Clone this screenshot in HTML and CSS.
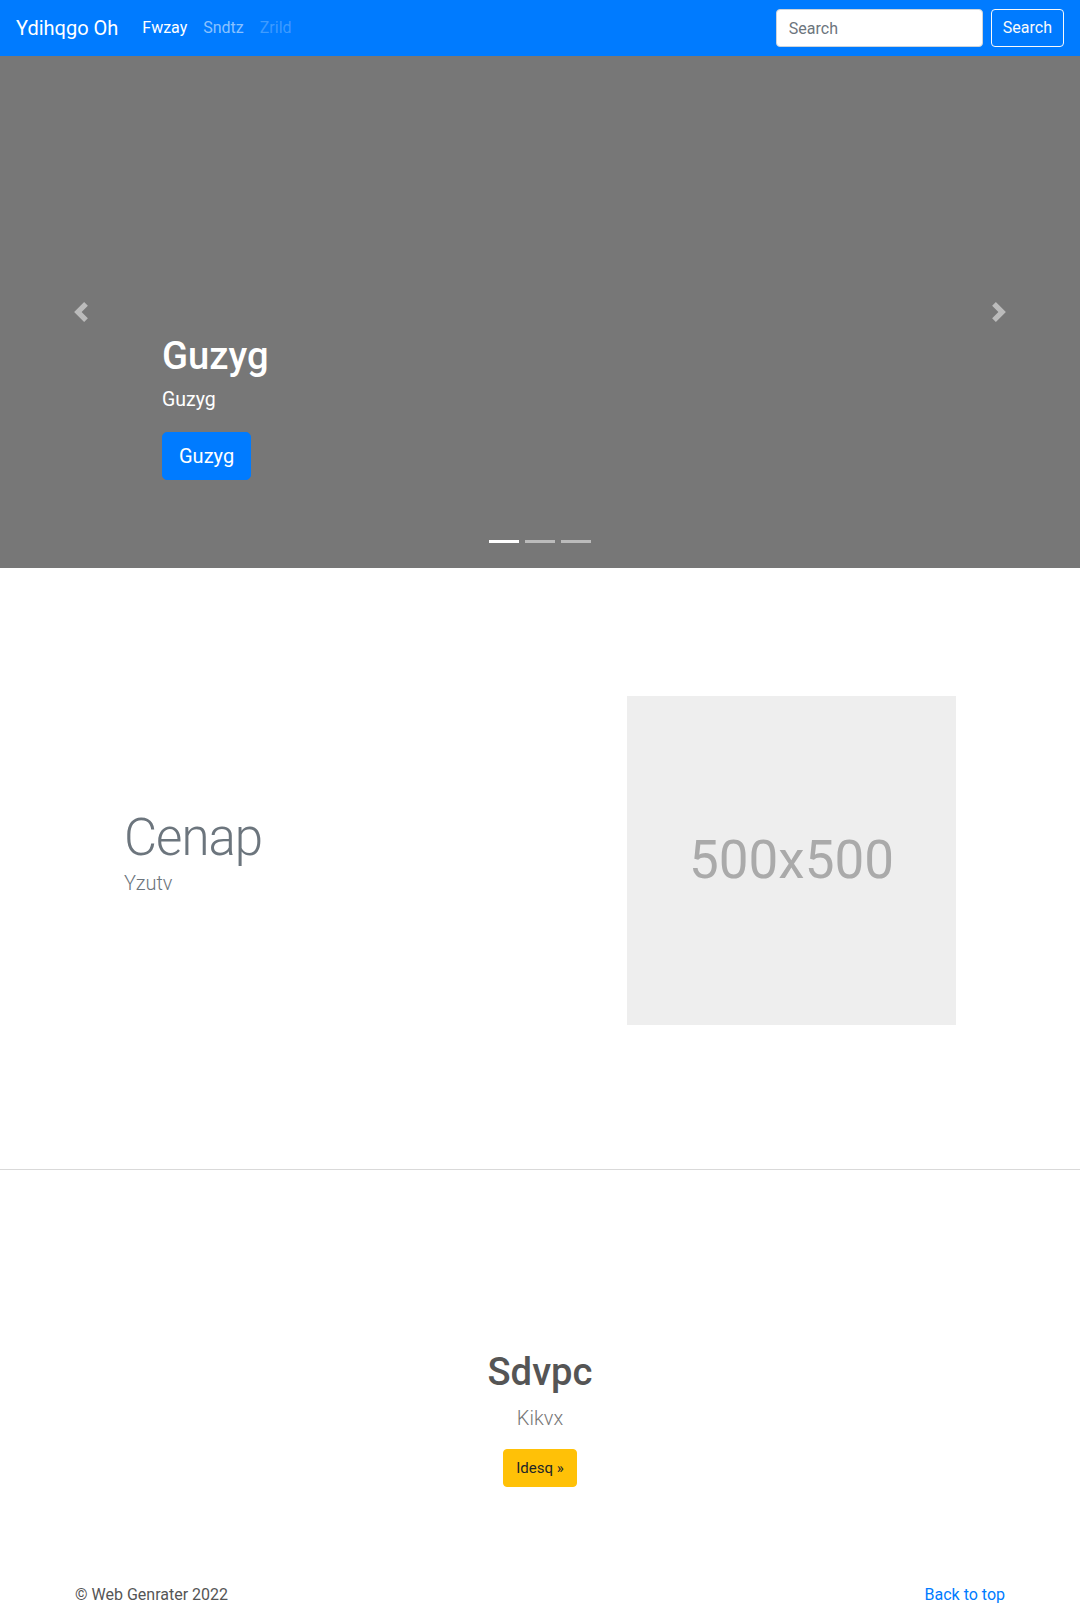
FILE: index.html
```html
<!DOCTYPE html>
<html lang="en">
<head>
<meta charset="utf-8">
<title>Ydihqgo Oh</title>
<link rel="stylesheet" href="styles.css">
</head>
<body>
<header class="navbar">
  <a class="brand" href="#">Ydihqgo Oh</a>
  <ul class="nav">
    <li><a class="nav-link active" href="#">Fwzay</a></li>
    <li><a class="nav-link" href="#">Sndtz</a></li>
    <li><a class="nav-link disabled" href="#">Zrild</a></li>
  </ul>
  <form class="search">
    <input class="search-input" type="text" placeholder="Search">
    <button class="search-btn" type="button">Search</button>
  </form>
</header>

<section class="carousel">
  <div class="caption">
    <h1 class="caption-title">Guzyg</h1>
    <p class="caption-text">Guzyg</p>
    <p class="caption-action"><a class="btn-lg" href="#">Guzyg</a></p>
  </div>
  <a class="control control-prev" href="#">
    <svg width="20" height="20" viewBox="0 0 8 8"><path fill="#fff" d="M5.25 0l-4 4 4 4 1.5-1.5L4.25 4l2.5-2.5L5.25 0z"/></svg>
  </a>
  <a class="control control-next" href="#">
    <svg width="20" height="20" viewBox="0 0 8 8"><path fill="#fff" d="M2.75 0l-1.5 1.5L3.75 4l-2.5 2.5L2.75 8l4-4-4-4z"/></svg>
  </a>
  <ol class="indicators">
    <li class="ind active"></li>
    <li class="ind"></li>
    <li class="ind"></li>
  </ol>
</section>

<section class="feature">
  <div class="feature-row">
    <div class="feature-text">
      <h2 class="feature-title">Cenap</h2>
      <p class="feature-lead">Yzutv</p>
    </div>
    <div class="placeholder"><span>500x500</span></div>
  </div>
</section>

<hr class="divider">

<section class="cta">
  <h1 class="cta-title">Sdvpc</h1>
  <p class="cta-lead">Kikvx</p>
  <div class="cta-actions"><a class="btn-warning" href="#">Idesq &raquo;</a></div>
</section>

<footer class="footer">
  <p class="copy">&copy; Web Genrater 2022</p>
  <p class="top"><a href="#">Back to top</a></p>
</footer>
</body>
</html>
```

FILE: styles.css
```css
* { box-sizing: border-box; }

body {
  margin: 0;
  font-family: Roboto, "Noto Sans", sans-serif;
  font-size: 16px;
  line-height: 1.5;
  color: #555;
  background: #fff;
}

a { text-decoration: none; }

/* Navbar */
.navbar {
  display: flex;
  align-items: center;
  padding: 8px 16px;
  background: #007bff;
}
.brand {
  font-size: 20px;
  line-height: 30px;
  padding: 5px 0;
  margin-right: 16px;
  color: #fff;
}
.nav {
  display: flex;
  list-style: none;
  margin: 0;
  padding: 0;
}
.nav-link {
  display: block;
  padding: 8px;
  color: rgba(255,255,255,.55);
}
.nav-link.active { color: #fff; }
.nav-link.disabled { color: rgba(255,255,255,.25); }

.search {
  margin-left: auto;
  display: flex;
  align-items: center;
}
.search-input {
  width: 207px;
  height: 38px;
  padding: 6px 12px;
  font: inherit;
  font-size: 16px;
  color: #495057;
  background: #fff;
  border: 1px solid #ced4da;
  border-radius: 4px;
  margin-right: 8px;
}
.search-input::placeholder { color: #6c757d; }
.search-btn {
  height: 38px;
  padding: 6px 11px;
  font: inherit;
  font-size: 16px;
  color: #f8f9fa;
  background: transparent;
  border: 1px solid #f8f9fa;
  border-radius: 4px;
}

/* Carousel */
.carousel {
  position: relative;
  height: 512px;
  background: #777;
  display: flex;
  align-items: flex-end;
  padding: 0 15% 52px;
}
.caption {
  flex: 1;
  padding: 20px 0;
  color: #fff;
}
.caption-title {
  margin: 0 0 6px;
  font-size: 38.2px;
  font-weight: 500;
  line-height: 1.2;
}
.caption-text {
  margin: 0 0 18px;
  font-size: 19.5px;
  line-height: 28px;
}
.caption-action {
  margin: 0 0 16px;
}
.btn-lg {
  display: inline-block;
  padding: 8px 16px;
  font-size: 20px;
  line-height: 30px;
  color: #fff;
  background: #007bff;
  border: 1px solid #007bff;
  border-radius: 5px;
}
.control {
  position: absolute;
  top: 0;
  bottom: 0;
  width: 15%;
  display: flex;
  align-items: center;
  justify-content: center;
  opacity: .5;
}
.control svg { display: block; }
.control-prev { left: 0; }
.control-next { right: 0; }

.indicators {
  position: absolute;
  left: 0;
  right: 0;
  bottom: 25px;
  display: flex;
  justify-content: center;
  list-style: none;
  margin: 0;
  padding: 0;
}
.ind {
  width: 30px;
  height: 3px;
  margin: 0 3px;
  background: #fff;
  opacity: .5;
}
.ind.active { opacity: 1; }

/* Feature */
.feature {
  padding: 128px 0 64px;
}
.feature-row {
  width: 960px;
  margin: 0 auto;
  display: grid;
  grid-template-columns: 1fr 329px;
  align-items: center;
  padding: 0 64px 0 64px;
}
.feature-title {
  margin: 0;
  font-size: 51px;
  font-weight: 300;
  line-height: 1.2;
  letter-spacing: -1px;
  color: #6c757d;
}
.feature-lead {
  margin: 0 0 16px;
  font-size: 20px;
  font-weight: 300;
  line-height: 30px;
  color: #6c757d;
}
.placeholder {
  width: 329px;
  height: 329px;
  background: #eee;
  display: flex;
  align-items: center;
  justify-content: center;
  color: #aaa;
  font-size: 53px;
  line-height: 1;
}

.divider {
  margin: 80px 0;
  border: 0;
  border-top: 1px solid #d9d9d9;
}

/* CTA */
.cta {
  padding: 100px 16px 95px;
  text-align: center;
}
.cta-title {
  margin: 0 0 7px;
  font-size: 38.2px;
  font-weight: 500;
  line-height: 1.2;
  color: #555;
}
.cta-lead {
  margin: 0 0 16px;
  font-size: 20px;
  font-weight: 300;
  line-height: 30px;
  color: #777;
}
.btn-warning {
  display: inline-block;
  padding: 6px 12px;
  font-size: 15px;
  line-height: 24px;
  color: #212529;
  background: #ffc107;
  border: 1px solid #ffc107;
  border-radius: 4px;
}

/* Footer */
.footer {
  width: 960px;
  margin: 0 auto;
  padding: 1px 15px 0;
  display: flex;
  justify-content: space-between;
}
.footer p { margin: 0 0 16px; }
.top a { color: #007bff; }
```
